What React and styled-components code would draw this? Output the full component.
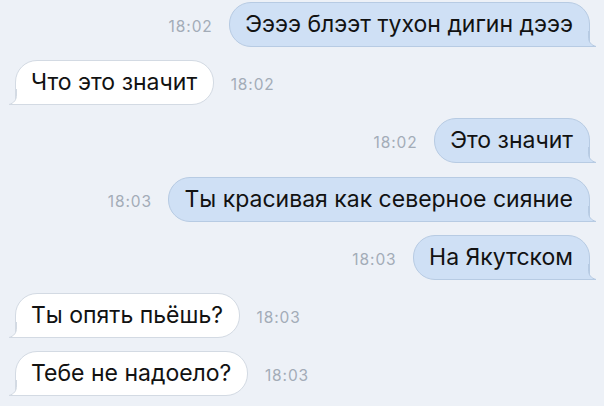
import React from "react";
import styled, { createGlobalStyle } from "styled-components";

const Global = createGlobalStyle`
  html, body { margin: 0; padding: 0; }
  body {
    background: #edf1f7;
    font-family: Inter, "Liberation Sans", Arial, sans-serif;
    -webkit-font-smoothing: antialiased;
  }
`;

const Chat = styled.div`
  width: 604px;
  height: 406px;
  box-sizing: border-box;
  padding: 2px 14px 0 15px;
  display: flex;
  flex-direction: column;
  gap: 13.2px;
  background: #edf1f7;
  overflow: hidden;
`;

const Row = styled.div`
  display: flex;
  flex-direction: ${(p) => (p.$out ? "row-reverse" : "row")};
  align-items: baseline;
  gap: 16.5px;
`;

const Bubble = styled.div`
  position: relative;
  box-sizing: border-box;
  height: 45px;
  padding: 8px 16px 8px 15px;
  font-size: 23px;
  line-height: 27px;
  color: #121212;
  white-space: nowrap;
  border: 1px solid ${(p) => (p.$out ? "#b7cbe3" : "#d3dae3")};
  background: ${(p) => (p.$out ? "#cfe0f5" : "#ffffff")};
  border-radius: ${(p) => (p.$out ? "22px 22px 0 22px" : "22px 22px 22px 0")};
`;

const Tail = styled.svg`
  position: absolute;
  bottom: -1px;
  width: 14px;
  height: 16px;
  overflow: visible;
  ${(p) => (p.$out ? "right: -8px;" : "left: -8px; transform: scaleX(-1);")}
`;

const Time = styled.span`
  font-size: 15.5px;
  letter-spacing: 0.9px;
  color: #a3acb7;
`;

const messages = [
  { out: true, text: "Ээээ блээт тухон дигин дэээ", time: "18:02" },
  { out: false, text: "Что это значит", time: "18:02" },
  { out: true, text: "Это значит", time: "18:02" },
  { out: true, text: "Ты красивая как северное сияние", time: "18:03" },
  { out: true, text: "На Якутском", time: "18:03" },
  { out: false, text: "Ты опять пьёшь?", time: "18:03" },
  { out: false, text: "Тебе не надоело?", time: "18:03" },
];

function BubbleTail({ out }) {
  const fill = out ? "#cfe0f5" : "#ffffff";
  const stroke = out ? "#b7cbe3" : "#d3dae3";
  return (
    <Tail $out={out} viewBox="0 0 14 16">
      <path d="M0,0 L5.5,0 L5.5,6 C5.5,11 8,14 13,15.5 L0,15.5 Z" fill={fill} />
      <path
        d="M5.5,0 L5.5,6 C5.5,11 8,14 13,15.5 L0,15.5"
        fill="none"
        stroke={stroke}
        strokeWidth="1"
      />
    </Tail>
  );
}

export default function App() {
  return (
    <>
      <Global />
      <Chat>
        {messages.map((m, i) => (
          <Row key={i} $out={m.out}>
            <Bubble $out={m.out}>
              {m.text}
              <BubbleTail out={m.out} />
            </Bubble>
            <Time>{m.time}</Time>
          </Row>
        ))}
      </Chat>
    </>
  );
}
